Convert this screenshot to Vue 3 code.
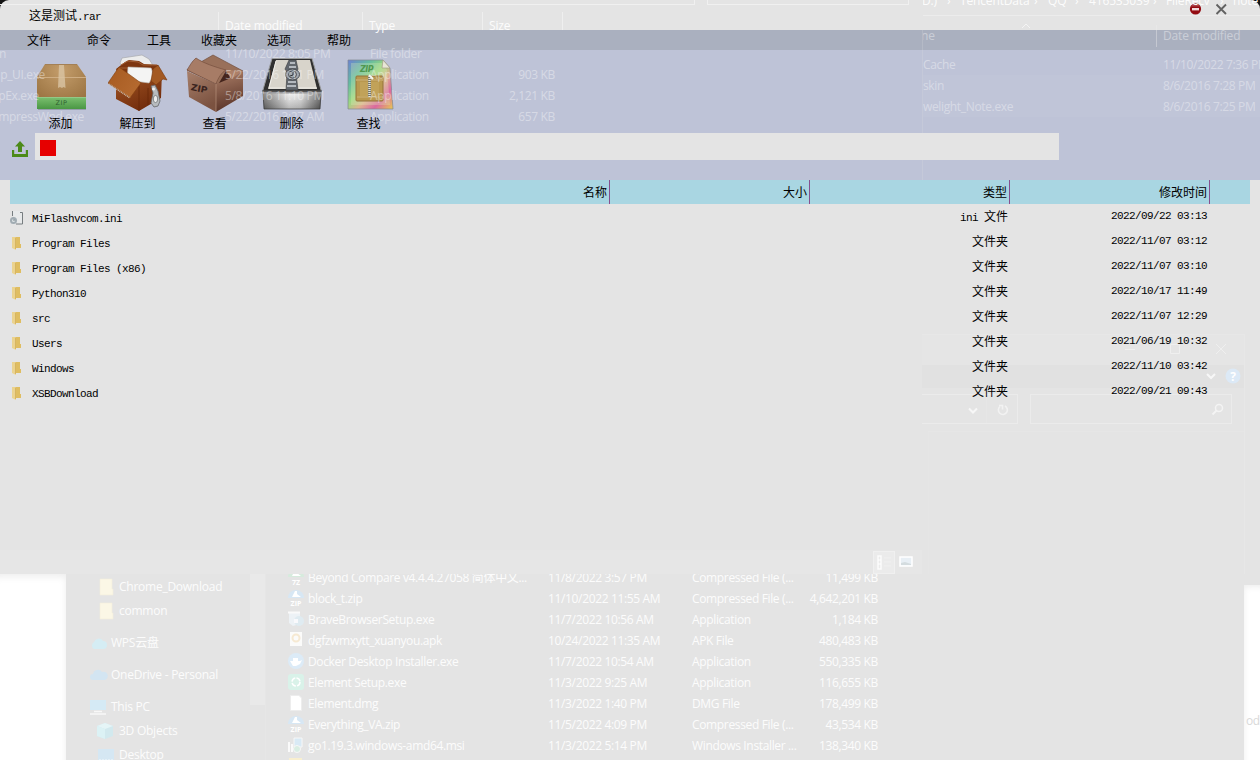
<script setup>
const menus = ['文件', '命令', '工具', '收藏夹', '选项', '帮助']
const columns = ['名称', '大小', '类型', '修改时间']
const files = [
  ['MiFlashvcom.ini', '2022/09/22 03:13'],
  ['Program Files', '2022/11/07 03:12'],
  ['Program Files (x86)', '2022/11/07 03:10'],
  ['Python310', '2022/10/17 11:49'],
  ['src', '2022/11/07 12:29'],
  ['Users', '2021/06/19 10:32'],
  ['Windows', '2022/11/10 03:42'],
  ['XSBDownload', '2022/09/21 09:43'],
]
const left = [
  ['n', 6, '11/10/2022 8:05 PM', 'File folder', ''],
  ['ip_UI.exe', 45, '5/22/2016 1:11 PM', 'Application', '903 KB'],
  ['pEx.exe', 39, '5/8/2016 11:10 PM', 'Application', '2,121 KB'],
  ['mpressWnd.exe', 84, '5/22/2016 3:27 AM', 'Application', '657 KB'],
]
const right = [
  ['Cache', '11/10/2022 7:36 PM'],
  ['skin', '8/6/2016 7:28 PM'],
  ['welight_Note.exe', '8/6/2016 7:25 PM'],
]
const crumbs = [['D:)', 0], ['›', 25], ['TencentData', 38], ['›', 112], ['QQ', 126], ['›', 153], ['416535039', 167], ['›', 231], ['FileRecv', 244], ['›', 298], ['note', 311]]
const downloads = [
  ['seven', 'Beyond Compare v4.4.4.27058 简体中文...', '11/8/2022 3:57 PM', 'Compressed File (...', '11,499 KB'],
  ['zip', 'block_t.zip', '11/10/2022 11:55 AM', 'Compressed File (...', '4,642,201 KB'],
  ['setup', 'BraveBrowserSetup.exe', '11/7/2022 10:56 AM', 'Application', '1,184 KB'],
  ['apk', 'dgfzwmxytt_xuanyou.apk', '10/24/2022 11:35 AM', 'APK File', '480,483 KB'],
  ['docker', 'Docker Desktop Installer.exe', '11/7/2022 10:54 AM', 'Application', '550,335 KB'],
  ['element', 'Element Setup.exe', '11/3/2022 9:25 AM', 'Application', '116,655 KB'],
  ['page', 'Element.dmg', '11/3/2022 1:40 PM', 'DMG File', '178,499 KB'],
  ['zip', 'Everything_VA.zip', '11/5/2022 4:09 PM', 'Compressed File (...', '43,534 KB'],
  ['msi', 'go1.19.3.windows-amd64.msi', '11/3/2022 5:14 PM', 'Windows Installer ...', '138,340 KB'],
  ['folder', '', '', '', ''],
]
const nav = [
  ['folder', 'Chrome_Download', 32, 13, 53], ['folder', 'common', 32, 37, 53],
  ['wps', 'WPS云盘', 24, 69, 45], ['cloud', 'OneDrive - Personal', 24, 101, 45],
  ['pc', 'This PC', 24, 133, 45], ['cube', '3D Objects', 31, 157, 53], ['desk', 'Desktop', 32, 181, 53],
]
</script>

<template>
  <div class="screen">
    <main class="app">
      <header class="title">
        <span>这是测试<span class="m">.rar</span></span>
        <svg class="wbtns" width="40" height="16" viewBox="0 0 40 16">
          <circle cx="6.5" cy="8" r="5.6" fill="#930b12" />
          <path d="M2 5.5a5 5 0 0 1 9 0z" fill="#b65a5d" opacity=".7" />
          <rect x="3" y="7" width="7" height="2.4" fill="#f1dada" />
          <path d="M27.5 3.5l9.500 9.500M37 3.500L27.500 13" stroke="#626262" stroke-width="1.900" fill="none" />
        </svg>
      </header>
      <nav class="menu"><span v-for="m in menus" :key="m">{{ m }}</span></nav>
      <section class="tools">
        <div class="tool">
          <svg viewBox="31 53 60 60">
            <defs>
              <radialGradient id="bx" cx=".5" cy=".15" r=".8"><stop offset="0" stop-color="#c49d6b" /><stop offset="1" stop-color="#98713f" /></radialGradient>
              <linearGradient id="gr" x2="0" y2="1"><stop offset="0" stop-color="#7cc070" /><stop offset="1" stop-color="#4a9744" /></linearGradient>
            </defs>
            <rect x="38" y="108" width="48" height="2" fill="#7f8592" opacity=".6" />
            <path d="M45 64h32l9 13v32H37V77z" fill="url(#bx)" />
            <path d="M45 64.500h32" stroke="#a48055" /><path d="M37 77.500h49" stroke="#cfae84" />
            <path d="M59 65h5l1.500 23-2-1-1.500 1-2-1-2 1z" fill="#d9c4a4" opacity=".8" />
            <rect x="37" y="97" width="49" height="12" fill="url(#gr)" />
            <path d="M37 97.500h49" stroke="#92c987" />
            <text x="61.500" y="105.300" text-anchor="middle" font-size="6.500" letter-spacing=".5" fill="#2f5f31">ZIP</text>
          </svg><span>添加</span>
        </div>
        <div class="tool">
          <svg viewBox="108 53 60 60">
            <defs><linearGradient id="wd" x2=".6" y2="1"><stop offset="0" stop-color="#a9602f" /><stop offset=".5" stop-color="#8a4118" /><stop offset="1" stop-color="#702b0c" /></linearGradient>
              <linearGradient id="fl" x2="1" y2=".6"><stop offset="0" stop-color="#a65a20" /><stop offset="1" stop-color="#b56a30" /></linearGradient></defs>
            <path d="M120 63l2-5 20-3 7 4 5 8-30 4z" fill="#ececec" stroke="#a7a9ad" stroke-width=".7" />
            <path d="M116 69l9-7 4-2 10 1 5 3 14 1 1 9-9 9-31-5z" fill="#7e3610" />
            <path d="M121 65l7-4 10 1 5 3 14 0M120 68h18" fill="none" stroke="#a25e33" />
            <path d="M116 83l24-4 22-7-1 26-22 13-23-12z" fill="url(#wd)" />
            <path d="M139 84v27M148 88v17" stroke="#662607" stroke-width=".7" />
            <path d="M128 67l23 1 3 7-5 8-22-3z" fill="#f4f4f3" stroke="#bdbdbb" stroke-width=".6" />
            <path d="M151 68l1 5 3 2z" fill="#c9c9c8" />
            <path d="M119 67l22 16-11 15-22-15z" fill="url(#fl)" stroke="#83400f" stroke-width=".6" />
            <path d="M109 84l21 14" stroke="#c9b5a3" stroke-width="1.500" stroke-dasharray="1 .8" />
            <path d="M158 65l9 15-4-1-7 6-5-4 2-12z" fill="#a35922" stroke="#76350c" stroke-width=".6" />
            <path d="M151 86l4-1 3 6 2 10-2 5-4 1-3-4 2-10z" fill="#b7bbbe" stroke="#65676a" stroke-width=".8" />
            <ellipse cx="155.500" cy="99" rx="2.200" ry="3.600" fill="#eceded" stroke="#6f7274" stroke-width=".8" />
            <circle cx="153.500" cy="89" r="1.500" fill="#f1f1f1" />
          </svg><span>解压到</span>
        </div>
        <div class="tool">
          <svg viewBox="185 53 60 60">
            <defs><linearGradient id="bl" x2=".4" y2="1"><stop offset="0" stop-color="#a8806b" /><stop offset="1" stop-color="#7b5240" /></linearGradient>
              <linearGradient id="br" x2=".2" y2="1"><stop offset="0" stop-color="#ad8069" /><stop offset="1" stop-color="#5b3529" /></linearGradient></defs>
            <path d="M187 70l26-15 30 16-26 13z" fill="#99705a" stroke="#73503f" stroke-width=".7" />
            <path d="M187 71l29 13v28l-27-15z" fill="url(#bl)" /><path d="M216 84l27-13v25l-27 16z" fill="url(#br)" />
            <path d="M226 71l5 7-12 5z" fill="#45251d" />
            <path d="M196 58c7 5 19 9 30 12-4 2-8 8-10 14l-29-14c2-3 5-9 9-12z" fill="#a77c66" stroke="#754f3d" stroke-width=".7" />
            <path d="M216 84v28" stroke="#c09b83" stroke-width=".6" /><path d="M226 70l17 1-12 8z" fill="#ad8068" />
            <text transform="translate(191 90) skewY(12)" font-size="9" font-weight="900" font-style="italic" fill="#39231e">ZIP</text>
          </svg><span>查看</span>
        </div>
        <div class="tool">
          <svg viewBox="262 53 60 60">
            <defs><linearGradient id="mt"><stop offset="0" stop-color="#666" /><stop offset=".45" stop-color="#ededed" /><stop offset=".65" stop-color="#dedede" /><stop offset="1" stop-color="#555" /></linearGradient>
              <linearGradient id="sh" x2="0" y2="1"><stop offset="0" stop-color="#fff" stop-opacity=".25" /><stop offset="1" stop-color="#333" stop-opacity=".3" /></linearGradient></defs>
            <path d="M272 58.500h40l9.500 33h-59z" fill="#303030" stroke="#9b9c9d" />
            <path d="M276 60h34l7 29h-49z" fill="#d8d4cb" />
            <path d="M276 61l-7 27h48" fill="none" stroke="#f0eee9" />
            <path d="M289 60h7l2 9-2 4 2 17h-12l1-17-2-4z" fill="#62676d" stroke="#3a3d40" stroke-width=".6" />
            <path d="M290 63h5M289 67h7M288 82h8M287 86h9" stroke="#b4b9bf" stroke-width="2" />
            <ellipse cx="292.500" cy="74.500" rx="7" ry="5.500" fill="#a3a9b0" stroke="#464a4e" />
            <ellipse cx="292.500" cy="74.500" rx="4" ry="3.600" fill="#a4abb1" stroke="#363a40" stroke-width=".8" /><path d="M293 72v3l-3 1" stroke="#303236" fill="none" />
            <path d="M263 93h58l-1 16h-56z" fill="url(#mt)" /><path d="M263 93h58l-1 16h-56z" fill="url(#sh)" stroke="#373737" stroke-width=".7" />
            <path d="M262 91.500h60" stroke="#555" stroke-width="2" /><path d="M263 93h58" stroke="#d7d7d7" stroke-width=".8" />
          </svg><span>删除</span>
        </div>
        <div class="tool">
          <svg viewBox="339 53 60 60">
            <defs><linearGradient id="rb" x2="1" y2="1"><stop offset="0" stop-color="#6d81d3" /><stop offset=".25" stop-color="#63bba0" /><stop offset=".45" stop-color="#9ad782" /><stop offset=".6" stop-color="#dfb38f" /><stop offset=".78" stop-color="#db68a0" /><stop offset="1" stop-color="#e8cb50" /></linearGradient>
              <linearGradient id="rs" x2="0" y2="1"><stop offset="0" stop-color="#547bd7" /><stop offset=".5" stop-color="#a669c7" /><stop offset="1" stop-color="#df4d77" /></linearGradient></defs>
            <path d="M348 60h35l7 8 3 41h-45z" fill="url(#rb)" stroke="#828791" stroke-width=".7" />
            <path d="M348.500 61v48" stroke="url(#rs)" stroke-width="3" /><path d="M351 63h31l5 7 3 35h-39z" fill="#e4efbb" opacity=".28" />
            <path d="M383 60l-1 8h8z" fill="#e8e6d7" stroke="#a69d86" stroke-width=".7" />
            <text x="360" y="72" font-size="8" font-weight="700" font-style="italic" letter-spacing="-.5" fill="#4f9850">ZIP</text>
            <rect x="356" y="76" width="27" height="25" rx="1" fill="#b9984e" stroke="#94733a" /><path d="M356 80h27M357 97h26" stroke="#c3a565" stroke-width="2" />
            <rect x="360" y="82" width="19" height="15" fill="#c5a75e" opacity=".7" />
            <path d="M369.500 76v21" stroke="#77776b" stroke-width="3" /><path d="M369.500 76v21" stroke="#e6e6da" stroke-width="2.400" stroke-dasharray="1 1" />
            <path d="M369 75l4 4" stroke="#f5f5f0" stroke-width="2" />
          </svg><span>查找</span>
        </div>
      </section>
      <section class="address">
        <svg width="16" height="16" viewBox="0 0 16 16"><path d="M8 0l5 5.500h-3V11H6V5.500H3zM0 9h2.200v4h11.600V9H16v7H0z" fill="#4c8a18" /></svg>
        <div class="field"><i></i></div>
      </section>
      <section class="table">
        <div class="row head"><span v-for="c in columns" :key="c">{{ c }}</span></div>
        <div v-for="(f, i) in files" :key="f[0]" class="row item">
          <span class="name">
            <svg v-if="i" width="13" height="14" viewBox="0 0 13 14"><path d="M4 1h6v7h1v4H4z" fill="#dfbd61" /><path d="M2 1h3l1 1v12l-4-2z" fill="#ebd390" /><path d="M5.500 2v11" stroke="#d0ad58" stroke-width=".8" /></svg>
            <svg v-else width="13" height="14" viewBox="0 0 13 14"><path d="M2.500 0H12v13H5" fill="#e7e9ea" /><path d="M2.500 0v5M10 1.500h2.500V13H6" fill="none" stroke="#777d80" /><circle cx="3.500" cy="9.500" r="2.500" fill="#dce2e5" stroke="#a1acb3" stroke-width="2" /><circle cx="4" cy="9" r=".8" fill="#707b81" /></svg>
            <span class="m">{{ f[0] }}</span>
          </span>
          <span></span>
          <span v-if="i" class="type">文件夹</span><span v-else class="type"><span class="m">ini </span>文件</span>
          <span class="m date">{{ f[1] }}</span>
        </div>
      </section>
    </main>

    <div class="desk">
      <div class="edge bottomleft"></div><div class="edge bottomright"><span>od</span></div>

      <div class="win wl">
        <div class="bar b1"></div><div class="bar b2"></div>
        <div class="lhead"><span>Date modified</span><span>Type</span><span>Size</span><span></span></div>
        <div class="dim lrows">
          <div v-for="r in left" :key="r[0]" class="lrow">
            <span class="cut"><b :style="{ width: r[1] + 'px' }">{{ r[0] }}</b></span>
            <span>{{ r[2] }}</span><span>{{ r[3] }}</span><span class="num">{{ r[4] }}</span>
          </div>
        </div>
        <div class="status">
          <svg width="48" height="24" viewBox="0 0 48 24"><rect x=".5" y="1.500" width="21" height="22" fill="#ebebeb" stroke="#f0f0f0" /><path d="M5 6h3v13H5z" fill="none" stroke="#fcfcfc" stroke-width="1.500" /><path d="M5 10h3M5 14h3" stroke="#fff" /><path d="M11 8h7M11 12h7M11 16h7" stroke="#f0f0f0" /><rect x="27" y="7" width="12" height="9" fill="#e8eff5" stroke="#fff" stroke-width="1.500" /><path d="M28 13l4-1 6 2v1H28z" fill="#d4dcdf" /></svg>
        </div>
      </div>

      <div class="win wr">
        <div class="crumbs"><span v-for="c in crumbs" :key="c[1]" :style="{ left: c[1] + 'px' }">{{ c[0] }}</span></div>
        <svg class="caret" width="10" height="6" viewBox="0 0 10 6"><path d="M1 5l4-4 4 4" fill="none" stroke="#f4f4f4" /></svg>
        <div class="dim rhead"><b>ne</b><span>Date modified</span></div>
        <div class="dim rrows"><div v-for="r in right" :key="r[0]"><b>{{ r[0] }}</b><span>{{ r[1] }}</span></div></div>
      </div>

      <div class="win wd">
        <div class="caption"></div><div class="ribbon"></div>
        <div class="search"><div></div><div></div></div>
        <div class="panel"></div>
        <svg class="ctl" width="323" height="100" viewBox="922 334 323 100" fill="none">
          <path d="M1125 349.500h10M1170.500 344.500h9v9h-9zM1216 344l10 10m0-10l-10 10" stroke="#efefef" />
          <path d="M1207 374l4 4 4-4M969 408.500l4 4 4-4" stroke="#f7f7f7" stroke-width="2" />
          <path d="M986.500 395v28" stroke="#e6e6e6" />
          <path d="M1000 406.500a4.500 4.500 0 1 0 5-.500M999 405.500h3.500v4" stroke="#f2f2f2" stroke-width="1.600" />
          <circle cx="1219" cy="408" r="3.500" stroke="#f4f4f4" stroke-width="1.500" /><path d="M1216.500 410.500l-4 4" stroke="#f4f4f4" stroke-width="2" />
          <circle cx="1233" cy="376" r="7.500" fill="#dce9f6" /><text x="1233" y="380.500" text-anchor="middle" font-size="12" font-weight="700" fill="#fff">?</text>
        </svg>
      </div>

      <div class="win wb">
        <div class="navpane">
          <div v-for="n in nav" :key="n[1]">
            <svg class="ni" width="18" height="18" viewBox="0 0 18 18" :style="{ left: n[2] + 'px', top: n[3] - 9 + 'px' }">
              <path v-if="n[0] === 'folder'" d="M2 1h12v10h1v6H2z" fill="#fbf7e6" stroke="#f4eedb" stroke-width=".6" />
              <path v-if="n[0] === 'wps'" d="M4 15a4 4 0 0 1 0-7 5 5 0 0 1 9-1 4 4 0 0 1 0 8z" fill="#d5edf4" />
              <path v-if="n[0] === 'cloud'" d="M3 14a3 3 0 0 1 0-6 5 5 0 0 1 9-2 4 4 0 0 1 3 8z" fill="#d3e5f2" />
              <g v-if="n[0] === 'pc'"><path d="M0 2h16v10H0z" fill="#d5eaf5" /><path d="M4 13.500h8M0 16h16" stroke="#f8f8f8" stroke-width="1.500" /></g>
              <g v-if="n[0] === 'cube'"><path d="M8 1l8 3v10l-8 3-8-3V4z" fill="#d2e9ee" /><path d="M0 4l8 3 8-3-8-3z" fill="#e5f5f7" /><path d="M8 7v10l-8-3V4z" fill="#dcf2f5" /></g>
              <g v-if="n[0] === 'desk'"><path d="M0 3h16v12H0z" fill="#d5e7f3" /><path d="M1 14h14" stroke="#f5f8fa" stroke-dasharray="2 1" /></g>
            </svg>
            <span :style="{ left: n[4] + 'px', top: n[3] - 11 + 'px' }">{{ n[1] }}</span>
          </div>
        </div>
        <div class="list">
          <div v-for="(d, i) in downloads" :key="i" class="drow">
            <svg width="16" height="16" viewBox="0 0 16 16">
              <g v-if="d[0] === 'zip' || d[0] === 'seven'"><path d="M0 8a8 8 0 0 1 16 0z" :fill="d[0] === 'zip' ? '#d7e7f4' : '#d6ebdd'" /><path d="M7 1h2v3l4 3H4z" fill="#fff" /><text x="8" y="15.500" text-anchor="middle" font-size="7" font-weight="700" fill="#fff">{{ d[0] === 'zip' ? 'ZIP' : '7Z' }}</text></g>
              <g v-if="d[0] === 'setup'"><path d="M1 1h11v12l-7 2-4-3z" fill="#edf2f6" /><path d="M0 1.500h12" stroke="#fafafa" stroke-width="2" /><circle cx="11" cy="10" r="5" fill="#dfebf1" /><path d="M6 8h4v4H6z" fill="#f9f9fc" /></g>
              <g v-if="d[0] === 'apk'"><path d="M2 0h12v14H2z" fill="#fbfbfa" /><circle cx="8" cy="6" r="3.500" fill="none" stroke="#f6e9d2" stroke-width="2" /></g>
              <g v-if="d[0] === 'docker'"><circle cx="8" cy="8" r="8" fill="#dcebf7" /><path d="M2 8h10l2-1-2 4-4 2H5z M5 5h5v3H5z" fill="#fff" /></g>
              <g v-if="d[0] === 'element'"><rect width="16" height="16" rx="3" fill="#d9f2e9" /><circle cx="8" cy="8" r="4" fill="none" stroke="#fff" stroke-width="1.500" stroke-dasharray="5 1.300" /></g>
              <path v-if="d[0] === 'page'" d="M2.500.5H11L13.500 3v12.500h-11z" fill="#fff" stroke="#ededed" />
              <g v-if="d[0] === 'msi'"><path d="M6 1h8v9H6z" fill="#d9eaf5" stroke="#f7f7f7" /><path d="M1 5v10M4 7v8" stroke="#fafafa" stroke-width="2" /><circle cx="9" cy="12" r="3.500" fill="#d9eee3" stroke="#f7f7f7" /></g>
              <rect v-if="d[0] === 'folder'" x="1" width="13" height="12" fill="#f8efcf" />
            </svg>
            <span>{{ d[1] }}</span><span>{{ d[2] }}</span><span>{{ d[3] }}</span><span class="num">{{ d[4] }}</span>
          </div>
        </div>
      </div>
    </div>
  </div>
</template>

<style>
html, body { margin: 0; background: #151515; overflow: hidden; }
</style>

<style scoped>
* { box-sizing: border-box; }
.screen { position: relative; width: 1260px; height: 760px; overflow: hidden; }
.app { height: 760px; background: #e4e4e4; border-radius: 9px 9px 0 0; overflow: hidden; font: 12px/16px "Liberation Sans", "Noto Sans CJK SC", sans-serif; color: #000; }
.m { font-family: "Liberation Mono", monospace; font-size: 11px; letter-spacing: -.6px; white-space: pre; }
.title { height: 30px; padding: 2px 31px 0 29px; display: flex; justify-content: space-between; align-items: center; }
.wbtns { margin-top: -15px; }
.menu { height: 20px; background: #aab0bf; padding-left: 9px; display: flex; line-height: 22px; }
.menu span { width: 60px; text-align: center; white-space: nowrap; }
.tools { height: 83px; background: #bec3d7; padding-left: 22px; display: flex; }
.tool { width: 77px; padding-top: 3px; display: flex; flex-direction: column; align-items: center; }
.tool svg { width: 60px; height: 60px; font-family: "DejaVu Sans", sans-serif; }
.tool > span { margin-top: 3px; position: relative; z-index: 2; }
.address { height: 47px; padding: 0 0 0 12px; background: #bec3d7; display: flex; gap: 7px; }
.address svg { margin-top: 8px; }
.field { width: 1024px; height: 27px; background: #e4e4e4; padding: 7px 5px; }
.field i { display: block; width: 16px; height: 16px; background: #e60000; }
.table { padding: 0 10px; position: relative; z-index: 2; }
.row { display: grid; grid-template-columns: 600px 200px 200px 200px 40px; }
.row > span { text-align: right; padding-right: 2px; }
.head { height: 24px; background: #a9d6e2; line-height: 26px; }
.head > span { padding-right: 2px; border-right: 1px solid #86508f; height: 24px; }
.item { height: 25px; line-height: 25px; }
.item .name { display: flex; align-items: center; gap: 9px; padding-top: 3px; }
.item .name svg { margin-top: -3px; }
.row > .type { padding-top: 1px; }
.row > .date { padding-right: 3px; }

.desk { position: absolute; z-index: 1; inset: 0; pointer-events: none; font: 12px/21px "Open Sans", "Noto Sans CJK SC", sans-serif; letter-spacing: -.35px; color: #fcfcfc; }
.win { position: absolute; overflow: hidden; }
.win b { font-weight: 400; }
.win span, .win b { white-space: nowrap; }
.dim { opacity: .4; }
.num { text-align: right; }
.wl { left: 0; top: 0; width: 922px; height: 574px; }
.bar { position: absolute; top: -4px; height: 9px; border: 1px solid #f0f0f0; }
.b1 { left: -2px; width: 697px; }
.b2 { left: 707px; width: 202px; }
.lhead { position: absolute; left: 218px; top: 12px; display: grid; grid-template-columns: 144px 120px 80px 1px; height: 18px; line-height: 27px; letter-spacing: -.15px; }
.lhead span { border-left: 1px solid #efefef; padding-left: 6px; height: 18px; }
.lrows { position: absolute; top: 43px; left: 0; }
.lrow { height: 21px; display: grid; grid-template-columns: 225px 145px 112px 73px; }
.cut { overflow: hidden; }
.cut b { display: flex; justify-content: flex-end; }
.status { position: absolute; left: 0; right: 0; bottom: 0; height: 24px; background: #e6e6e6; }
.status svg { position: absolute; left: 873px; top: 0; }
.wr { left: 922px; top: 0; width: 338px; height: 334px; border-left: 1px solid #e7e7e730; }
.crumbs { position: absolute; left: -1px; top: 0; width: 338px; height: 16px; border-bottom: 1px solid #ececec; letter-spacing: -.15px; }
.crumbs span { position: absolute; top: -10px; }
.caret { position: absolute; left: 98px; top: 23px; }
.rhead, .rrows div { display: grid; grid-template-columns: 240px 1fr; }
.rhead { position: absolute; left: -2px; top: 25px; width: 338px; grid-template-columns: 242px 1fr; letter-spacing: -.15px; }
.rhead::after { content: ""; position: absolute; left: 235px; top: 0; width: 1px; height: 22px; background: #eee; }
.rrows { position: absolute; left: 0; top: 54px; width: 337px; }
.rrows div:nth-child(n+2) { background: #d8daea33; }
.wd { left: 922px; top: 334px; width: 323px; height: 240px; border: 1px solid #e7e7e7; border-bottom: 0; border-left: 0; }
.caption { height: 30px; background: #e5e5e5; }
.ribbon { height: 23px; background: #e1e1e1; }
.search { margin-top: 6px; display: flex; gap: 12px; }
.search div { height: 30px; border: 1px solid #ebebeb; width: 202px; }
.search div:first-child { width: 96px; border-left: 0; }
.panel { margin: 7px 0 0 6px; height: 200px; border-top: 1px solid #e6e6e6; border-left: 1px solid #e5e5e5; }
.ctl { position: absolute; left: 0; top: -1px; font-family: "Open Sans", sans-serif; }
.wb { left: 66px; top: 574px; width: 1178px; height: 186px; }
.navpane { position: absolute; left: 0; top: 0; width: 200px; height: 186px; border-right: 1px solid #e6e6e6; letter-spacing: -.25px; }
.navpane::after { content: ""; position: absolute; left: 184px; top: 0; width: 15px; height: 131px; background: #e9e9e9; }
.navpane span, .ni { position: absolute; }
.list { position: absolute; left: 222px; top: -7px; }
.drow { height: 21px; display: grid; grid-template-columns: 20px 240px 144px 106px 80px; }
.drow svg { margin-top: 2px; font-family: "Open Sans", sans-serif; letter-spacing: 0; }
.edge { position: absolute; background: #fff; }
.bottomleft { left: 0; top: 574px; width: 66px; height: 186px; box-shadow: inset -3px 6px 7px -3px #eee; }
.bottomright { left: 1244px; top: 585px; width: 16px; height: 175px; overflow: hidden; color: #d9d9d9; box-shadow: inset 3px 5px 6px -3px #eee; }
.bottomright span { position: absolute; left: 2px; top: 125px; }
</style>
